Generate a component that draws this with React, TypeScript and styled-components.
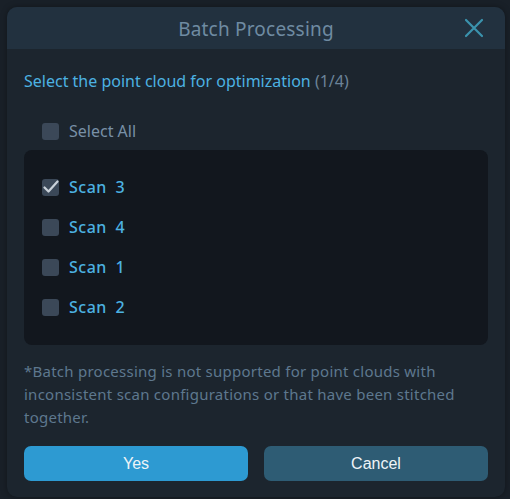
import React from "react";
import styled, { createGlobalStyle } from "styled-components";

const Global = createGlobalStyle`
  html, body { margin: 0; padding: 0; background: #192028; }
  body { font-family: "Noto Sans", "Open Sans", sans-serif; }
  * { box-sizing: border-box; }
`;

const Page = styled.div`
  width: 510px;
  height: 499px;
  padding: 7px 5px 2px 7px;
  display: flex;
`;

const Dialog = styled.div`
  flex: 1;
  display: flex;
  flex-direction: column;
  background: #1c252e;
  border-radius: 10px;
  overflow: hidden;
  box-shadow: 0 0 6px rgba(0, 0, 0, 0.35);
`;

const Header = styled.div`
  height: 42px;
  background: #22313f;
  display: flex;
  align-items: center;
  justify-content: center;
  position: relative;
`;

const Title = styled.div`
  color: #6f8ba2;
  font-size: 19px;
  letter-spacing: 0.2px;
  margin-top: 2px;
`;

const Close = styled.button`
  position: absolute;
  right: 20px;
  top: 10px;
  width: 22px;
  height: 22px;
  padding: 0;
  border: none;
  background: transparent;
  display: flex;
  align-items: center;
  justify-content: center;
`;

const Body = styled.div`
  flex: 1;
  display: flex;
  flex-direction: column;
  padding: 20px 17px 0 17px;
`;

const Subtitle = styled.div`
  color: #4cb2e2;
  font-size: 16px;
  line-height: 22px;
  margin-top: 1px;
`;

const Count = styled.span`
  color: #6b8399;
`;

const Row = styled.label<{ $height?: number }>`
  display: flex;
  align-items: center;
  gap: 10px;
  height: ${(p) => p.$height ?? 40}px;
`;

const SelectAllRow = styled(Row)`
  padding-left: 18px;
  margin-top: 24px;
`;

const Box = styled.span`
  width: 17px;
  height: 17px;
  border-radius: 3px;
  background: #3b4858;
  display: flex;
  align-items: center;
  justify-content: center;
  flex-shrink: 0;
`;

const AllText = styled.span`
  color: #7890a7;
  font-size: 16px;
`;

const ItemText = styled.span`
  color: #4cb2e2;
  font-size: 16px;
  font-weight: 500;
  word-spacing: 4px;
  letter-spacing: 0.5px;
`;

const List = styled.div`
  margin-top: 4px;
  height: 195px;
  background: #12171e;
  border-radius: 8px;
  padding: 17px 0 0 18px;
  display: flex;
  flex-direction: column;
`;

const Note = styled.div`
  margin-top: 15px;
  color: #5e788e;
  font-size: 15px;
  letter-spacing: 0.25px;
  line-height: 23px;
`;

const Buttons = styled.div`
  margin-top: 17px;
  display: grid;
  grid-template-columns: 1fr 1fr;
  gap: 16px;
`;

const Btn = styled.button<{ $primary?: boolean }>`
  height: 35px;
  border: none;
  border-radius: 7px;
  background: ${(p) => (p.$primary ? "#2d9ad2" : "#2e5c74")};
  color: #eef4f8;
  font-family: "Liberation Sans", Arial, sans-serif;
  font-size: 16px;
`;

const Check = () => (
  <svg width="17" height="17" viewBox="0 0 17 17">
    <path d="M2.5 8.5 L6.5 12.5 L15.5 2.5" fill="none" stroke="#c9d1d9" strokeWidth="2.2" strokeLinecap="round" strokeLinejoin="round" />
  </svg>
);

const items = [
  { name: "Scan 3", checked: true },
  { name: "Scan 4", checked: false },
  { name: "Scan 1", checked: false },
  { name: "Scan 2", checked: false },
];

export default function App() {
  return (
    <>
      <Global />
      <Page>
        <Dialog>
          <Header>
            <Title>Batch Processing</Title>
            <Close>
              <svg width="20" height="20" viewBox="0 0 20 20">
                <path d="M2 2 L18 18 M18 2 L2 18" stroke="#3b93ad" strokeWidth="2.2" strokeLinecap="round" />
              </svg>
            </Close>
          </Header>
          <Body>
            <Subtitle>
              Select the point cloud for optimization <Count>(1/4)</Count>
            </Subtitle>
            <SelectAllRow $height={30}>
              <Box />
              <AllText>Select All</AllText>
            </SelectAllRow>
            <List>
              {items.map((it) => (
                <Row key={it.name}>
                  <Box>{it.checked && <Check />}</Box>
                  <ItemText>{it.name}</ItemText>
                </Row>
              ))}
            </List>
            <Note>
              *Batch processing is not supported for point clouds with inconsistent scan configurations or that have been stitched together.
            </Note>
            <Buttons>
              <Btn $primary>Yes</Btn>
              <Btn>Cancel</Btn>
            </Buttons>
          </Body>
        </Dialog>
      </Page>
    </>
  );
}
